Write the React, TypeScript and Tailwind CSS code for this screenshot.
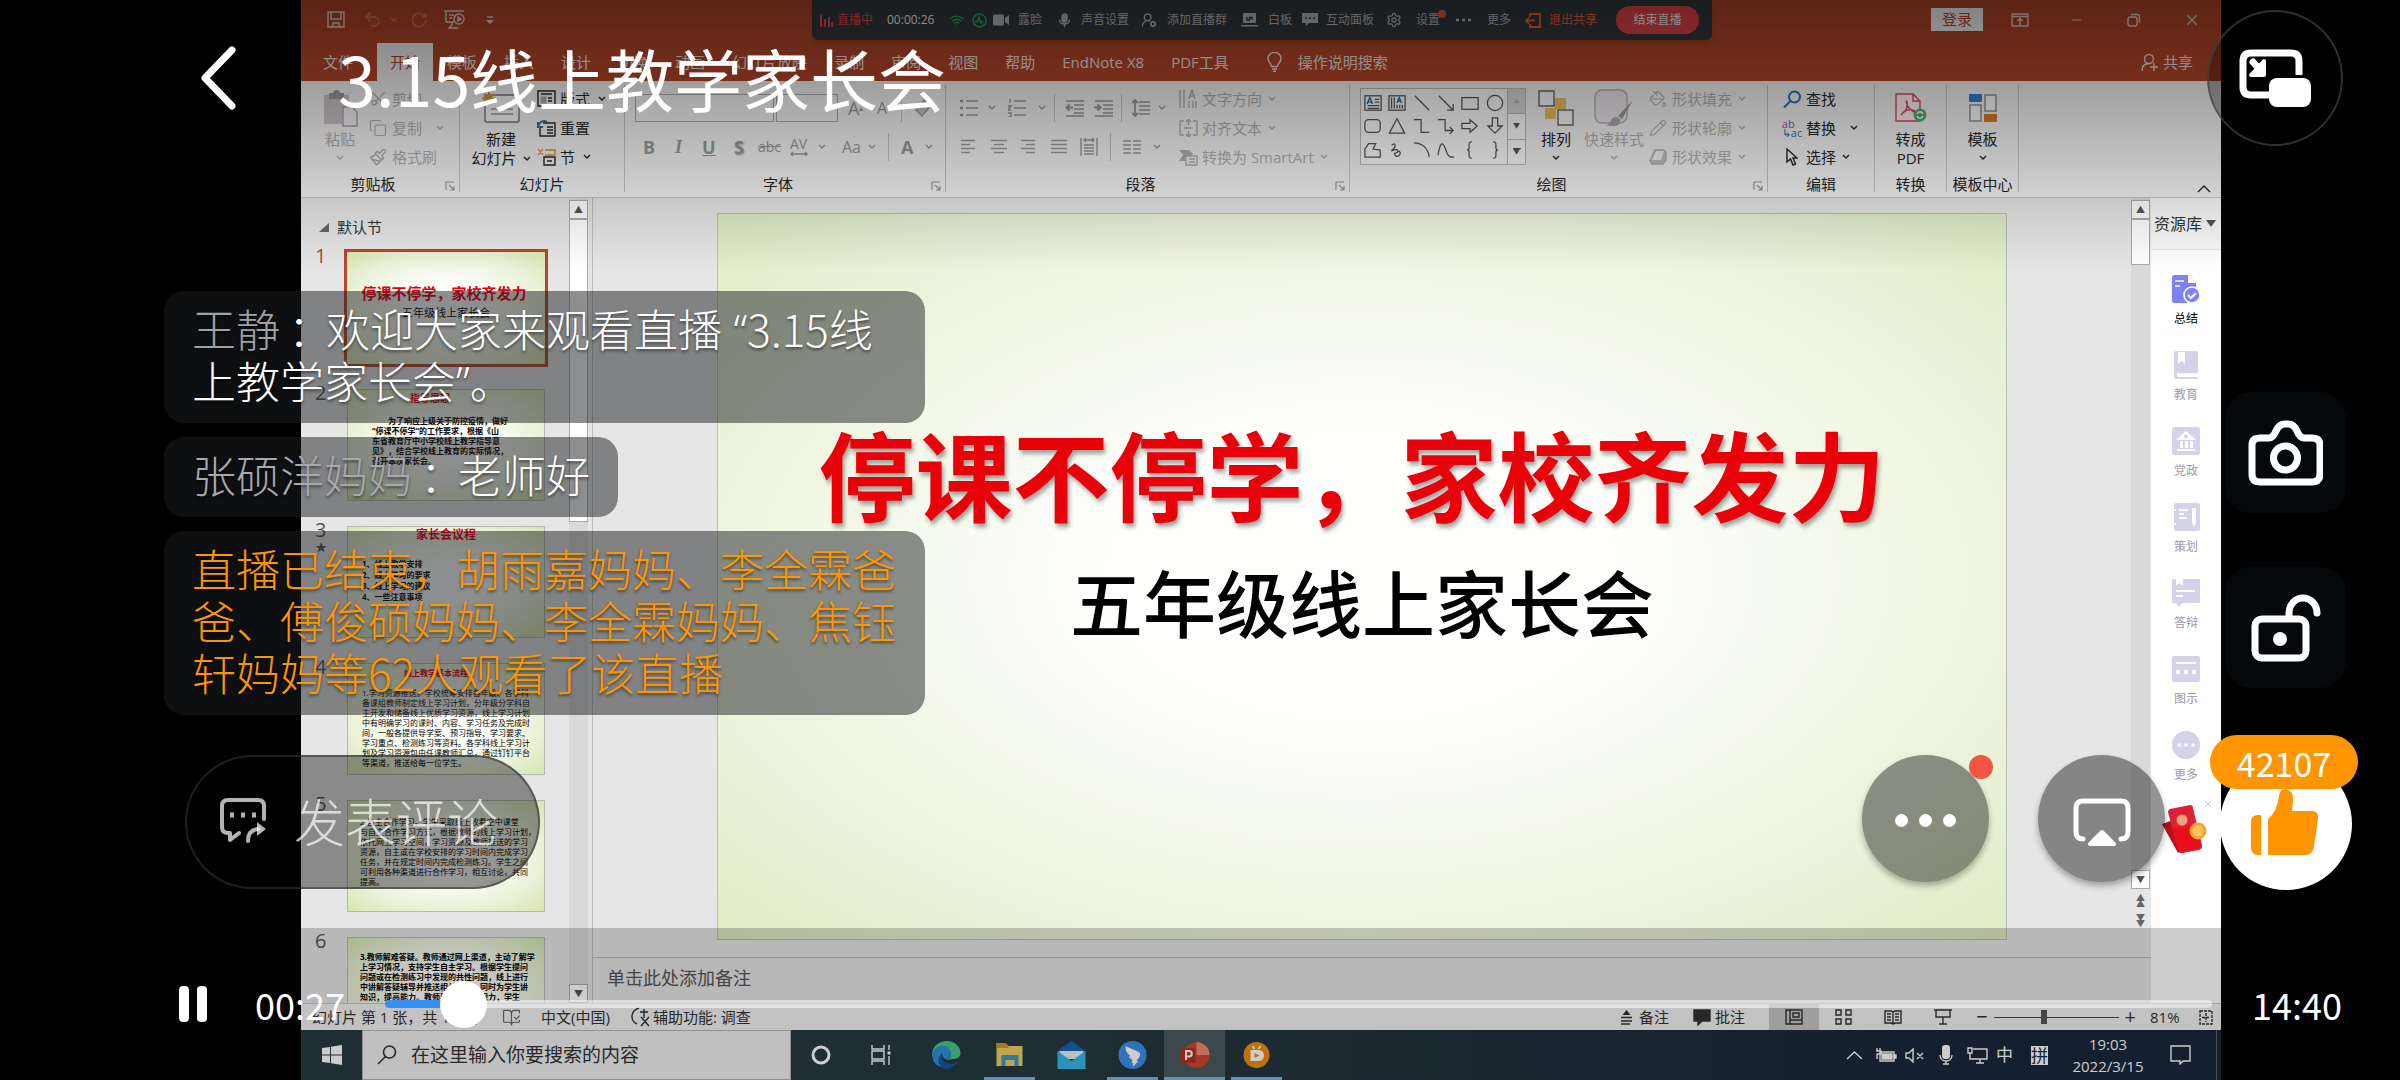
import { useState, type ReactNode } from 'react';
import {
  BookOpenCheck,
  Copy,
  Minus,
  PaintBucket,
  Paintbrush,
  Pencil,
  RotateCw,
  Scissors,
  Settings,
  Undo2,
  UserRoundCog,
  Wifi,
  X,
} from 'lucide-react';

interface DrawProps {
  w: number;
  h: number;
  vb?: string;
  sw?: number;
  className?: string;
  children: ReactNode;
}

// Line drawing with the page's default stroke settings
function Draw({ w, h, vb, sw = 1.4, className, children }: DrawProps) {
  return (
    <svg
      width={w}
      height={h}
      viewBox={vb ?? `0 0 ${w} ${h}`}
      fill="none"
      stroke="currentColor"
      strokeWidth={sw}
      className={`shrink-0 ${className ?? ''}`}
      aria-hidden="true"
    >
      {children}
    </svg>
  );
}

function Chev({ className }: { className?: string }) {
  return (
    <Draw w={8} h={6} className={className}>
      <path d="M1 1l3 3 3-3" />
    </Draw>
  );
}

function Divider() {
  return <span className="h-7 w-px shrink-0 bg-[#c4c4c4]" />;
}

/* ---------- title bar ---------- */

function LiveBar() {
  return (
    <div className="absolute left-[511px] top-0 flex h-10 w-[900px] items-center rounded-b-md bg-[#33393d] pl-2 text-xs text-[#b9bcbe] shadow-md">
      <Draw w={13} h={14} sw={2} className="text-[#e5484d]">
        <path d="M1 1v13M5 6v8M9 4v10M12 9v5" />
      </Draw>
      <span className="ml-1 w-[50px] text-[#e5484d]">直播中</span>
      <span className="w-[62px] text-white">00:00:26</span>
      <Wifi size={15} className="text-[#25b36a]" />
      <Draw w={15} h={15} className="ml-2 text-[#25b36a]">
        <circle cx="7.500" cy="7.500" r="6.500" />
        <path d="M3 9l3-1 1-4 2 6 2-2" />
      </Draw>
      <button className="ml-1.5 flex items-center gap-2">
        <Draw w={17} h={12} className="text-[#b9bcbe]">
          <rect x="0" y="0.500" width="11" height="11" rx="1.500" fill="currentColor" stroke="none" />
          <path d="M12 4l4-3v10l-4-3z" fill="currentColor" stroke="none" />
        </Draw>
        露脸
      </button>
      <button className="ml-4 flex items-center gap-2.5">
        <Draw w={13} h={15}>
          <rect x="4" y="1" width="5" height="8" rx="2.500" fill="currentColor" />
          <path d="M1.500 6.500c0 6 10 6 10 0M6.500 11v3" />
        </Draw>
        声音设置
      </button>
      <button className="ml-3 flex items-center gap-2.5">
        <UserRoundCog size={16} />
        添加直播群
      </button>
      <button className="ml-3.5 flex items-center gap-2.5">
        <Draw w={17} h={14}>
          <path d="M2 0h13v10H2zM0 12h17v1.500H0z" fill="currentColor" stroke="none" />
          <path d="M6 4v3h2.500V4.500H11V7" stroke="#33393d" />
        </Draw>
        白板
      </button>
      <button className="ml-2.5 flex items-center gap-2">
        <Draw w={16} h={14}>
          <path d="M0 0h16v10H7l-3 3v-3H0z" fill="currentColor" stroke="none" />
          <path d="M3 5h2M7 5h2M11 5h2" stroke="#33393d" />
        </Draw>
        互动面板
      </button>
      <button className="relative ml-3 flex items-center gap-3.5">
        <Settings size={16} />
        设置
        <span className="absolute -right-1.5 -top-0.5 size-2 rounded-full bg-[#f0543c]" />
      </button>
      <button className="ml-4 flex items-center gap-4">
        <Draw w={15} h={4}>
          <path d="M0 2h3M6 2h3M12 2h3" strokeWidth="2.500" />
        </Draw>
        更多
      </button>
      <button className="ml-3.5 flex items-center gap-2 text-[#f2603c]">
        <Draw w={16} h={15} sw={1.800}>
          <path d="M5 4V1h10v13H5v-3M10 7.500H1M4 4.500l-3 3 3 3" />
        </Draw>
        退出共享
      </button>
      <button className="ml-auto mr-[13px] h-7 w-[83px] rounded-full bg-[#e8474b] text-white">结束直播</button>
    </div>
  );
}

function TitleBar() {
  return (
    <div className="relative flex h-[43px] items-center bg-[#b7472a] px-5 pb-1 text-[#ecd9d4]">
      <Draw w={18} h={17} className="ml-1.5 mr-1">
        <path d="M1 1h16v15H1zM4 1v7h10V1M6 16v-4h6v4" />
      </Draw>
      <Undo2 size={19} className="ml-3.5 text-[#d0745c]" />
      <Chev className="ml-2 text-[#d0745c]" />
      <RotateCw size={18} className="ml-3 text-[#d0745c]" />
      <Draw w={22} h={19} className="ml-4">
        <path d="M0 1h20M2 1v11h8M8 12v3l-3 3h9M5 5h5M5 8h3" />
        <circle cx="15" cy="9" r="5" />
        <path d="M14 7l3 2-3 2z" fill="currentColor" />
      </Draw>
      <Draw w={8} h={8} className="ml-5">
        <path d="M1 1h6" />
        <path d="M0 4h8l-4 4z" fill="currentColor" stroke="none" />
      </Draw>
      <LiveBar />
      <button className="ml-auto h-[23px] w-[52px] bg-white text-[15px] leading-[23px] text-[#b7472a]">登录</button>
      <Draw w={18} h={14} className="ml-7">
        <path d="M1 1h16v12H1zM1 3.500h16M9 12V6M6.500 8L9 5.500 11.500 8" />
      </Draw>
      <Minus size={16} strokeWidth={1.500} className="ml-10" />
      <Draw w={14} h={14} className="ml-[42px]">
        <rect x="1" y="4" width="9" height="9" rx="2" />
        <path d="M4 1.500h6.500a2 2 0 0 1 2 2V10" />
      </Draw>
      <X size={18} strokeWidth={1.500} className="ml-[42px]" />
    </div>
  );
}

const tabs = ['文件', '开始', '模板', '插入', '设计', '切换', '动画', '幻灯片放映', '录制', '审阅', '视图', '帮助', 'EndNote X8', 'PDF工具'];

function TabRow() {
  return (
    <div className="flex h-[38px] items-stretch gap-px bg-[#b7472a] pl-[9px] pr-7 text-[15px] leading-9 text-[#f3e4e0]">
      {tabs.map((tab, i) => (
        <button
          key={tab}
          className={`px-[13px] ${i === 1 ? 'ml-2.5 bg-[#f3f3f3] text-[#b7472a]' : ''}`}
        >
          {tab}
        </button>
      ))}
      <button className="ml-6 flex items-center gap-4">
        <Draw w={15} h={20}>
          <path d="M4.500 14.500C4 11 1 10 1 6.500a6.300 6 0 0 1 13 0c0 3.500-3 4.500-3.500 8zM5 17h5M6 19.300h3" />
        </Draw>
        操作说明搜索
      </button>
      <button className="ml-auto flex items-center gap-1">
        <Draw w={18} h={18}>
          <circle cx="8" cy="6" r="4.500" />
          <path d="M1 18c0-5 3-7.500 7-7.500M13 10v8M9 14h8" />
        </Draw>
        共享
      </button>
    </div>
  );
}

/* ---------- ribbon ---------- */

interface GroupProps {
  label: string;
  width: string;
  launcher?: boolean;
  children: ReactNode;
}

function Group({ label, width, launcher, children }: GroupProps) {
  return (
    <>
      <section className={`flex h-28 shrink-0 flex-col ${width}`}>
        <div className="flex h-[87px]">{children}</div>
        <div className="flex h-6 items-center">
          <h2 className="flex-1 text-center">{label}</h2>
          {launcher && (
            <Draw w={10} h={10} className="mr-1 mt-1 text-[#999]" sw={1.200}>
              <path d="M1 9V1h8M4 4l5 5M9 5v4H5" />
            </Draw>
          )}
        </div>
      </section>
      <span className="h-[107px] w-px shrink-0 bg-[#c4c4c4]" />
    </>
  );
}

interface ItemProps {
  icon: ReactNode;
  text: string;
  chev?: string;
  dim?: boolean;
}

// One line of a three-line command column
function Item({ icon, text, chev, dim }: ItemProps) {
  return (
    <button className={`flex h-[29px] items-center whitespace-nowrap pb-0.5 ${dim ? 'text-[#b0b0b0]' : ''}`}>
      <span className="mr-1 flex w-5 justify-center">{icon}</span>
      {text}
      {chev && <Chev className={chev} />}
    </button>
  );
}

interface BigProps {
  icon: ReactNode;
  lines: string[];
  chev?: 'inline' | 'below';
  dim?: boolean;
  className?: string;
}

function BigButton({ icon, lines, chev, dim, className }: BigProps) {
  return (
    <button className={`flex flex-col items-center justify-start whitespace-nowrap leading-[19px] ${dim ? 'text-[#b0b0b0]' : ''} ${className ?? ''}`}>
      <span className="flex h-[45px] items-center">{icon}</span>
      {lines.map((line, i) => (
        <span key={line} className="flex items-center gap-1.5">
          {line}
          {chev === 'inline' && i === lines.length - 1 && <Chev />}
        </span>
      ))}
      {chev === 'below' && <Chev className="mt-1.5" />}
    </button>
  );
}

function ShapeGallery() {
  const shapes = [
    <><rect x="1" y="2" width="18" height="16" /><path d="M12 6h5M12 9h5M4 13h13M4 16h13" /><path d="M3.500 11l3-7 3 7M4.500 9h4" stroke="#2f6fa8" strokeWidth="1.600" /></>,
    <><rect x="1" y="2" width="18" height="16" /><path d="M4 4v12M7 4v12M10 12v4M13 12v4M16 12v4" /><path d="M10 10l2.500-6 2.500 6M11 8h3" stroke="#2f6fa8" strokeWidth="1.600" /></>,
    <path d="M2 2l16 16" />,
    <path d="M2 2l16 16M18 11v7h-7" />,
    <rect x="1" y="4" width="18" height="13" />,
    <circle cx="10" cy="10" r="8.500" />,
    <rect x="1" y="3" width="17" height="14" rx="4" />,
    <path d="M10 2l8.500 16h-17z" />,
    <path d="M1 3h8v14h9" />,
    <path d="M1 3h8v12h9M14 11l4 4-4 4" />,
    <path d="M1 7h9V3l8 7-8 7v-4H1z" />,
    <path d="M7 1h6v9h5l-8 8-8-8h5z" />,
    <path d="M5 3h8l-3 6 8 1v8H1V9z" />,
    <path d="M4 5c5-5 5 2 1 5s6-3 6 1-6 1-3 5 9-4 3-5" />,
    <path d="M1 2c9 0 16 6 17 16" />,
    <path d="M1 16C5-8 9 8 11 13s4 5 8 5" />,
    <path d="M12 1c-3 0-3 1-3 3v3c0 2-1 3-2 3 1 0 2 1 2 3v3c0 2 0 3 3 3" />,
    <path d="M8 1c3 0 3 1 3 3v3c0 2 1 3 2 3-1 0-2 1-2 3v3c0 2 0 3-3 3" />,
  ];
  return (
    <div className="mt-[3px] flex h-[77px] w-[166px] border border-[#bbb] bg-[#fbfbfb] text-[#555]">
      <div className="grid flex-1 grid-cols-6 place-items-center py-0.5">
        {shapes.map((shape, i) => (
          <Draw key={i} w={18} h={18} vb="0 0 20 20">
            {shape}
          </Draw>
        ))}
      </div>
      <div className="flex w-[18px] flex-col border-l border-[#bbb]">
        <span className="flex flex-1 items-center justify-center bg-[#d8d8d8] text-[5px] text-[#aaa]">▲</span>
        <span className="flex flex-1 items-center justify-center border-y border-[#bbb] text-[7px]">▼</span>
        <span className="flex flex-1 flex-col items-center justify-center text-[7px] leading-[6px]">
          <span className="h-px w-2 bg-[#555]" />▼
        </span>
      </div>
    </div>
  );
}

function Lines({ xs }: { xs: [number, number][] }) {
  return (
    <Draw w={18} h={16}>
      {xs.map(([a, b], i) => (
        <path key={i} d={`M${a} ${1.5 + i * 4}H${b}`} />
      ))}
    </Draw>
  );
}

function Ribbon() {
  return (
    <div className="flex h-[117px] shrink-0 border-b border-[#c6c6c6] bg-[#f3f3f3] pt-1 text-[15px] leading-5 text-[#262626]">
      <Group label="剪贴板" width="w-[158px]" launcher>
        <BigButton
          dim
          className="ml-[19px] w-10"
          lines={['粘贴']}
          chev="below"
          icon={
            <Draw w={35} h={38}>
              <rect x="1" y="6" width="25" height="29" fill="#c9c3c9" stroke="none" />
              <path d="M6 4h4c0-4 7-4 7 0h4v6H6z" fill="#9a9a9a" stroke="none" />
              <path d="M20 18h9l5 5v14H20z" fill="#f3eef4" stroke="#a9a2ab" />
            </Draw>
          }
        />
        <div className="ml-2">
          <Item dim icon={<Scissors size={17} className="-rotate-90" />} text="剪切" />
          <Item dim icon={<Copy size={18} strokeWidth={1.500} />} text="复制" chev="ml-3.5" />
          <Item dim icon={<Paintbrush size={18} />} text="格式刷" />
        </div>
      </Group>

      <Group label="幻灯片" width="w-[164px]">
        <BigButton
          className="ml-2.5 w-[62px]"
          lines={['新建', '幻灯片']}
          chev="inline"
          icon={
            <Draw w={40} h={34}>
              <rect x="4" y="4" width="34" height="27" rx="2" fill="#fafafa" stroke="#777" />
              <path d="M10 18h22M10 23h22" stroke="#999" />
              <path d="M8 1v13M1 7.500h14M3 3l10 9M13 3L3 12" stroke="#d9962f" strokeWidth="2" />
            </Draw>
          }
        />
        <div className="ml-1">
          <Item
            text="版式"
            chev="ml-2"
            icon={
              <Draw w={19} h={17}>
                <path d="M1 1h17v15H1zM4 4h11M11 8h4M11 11h4" />
                <rect x="3.500" y="6.500" width="6" height="7" fill="#aaa" stroke="none" />
              </Draw>
            }
          />
          <Item
            text="重置"
            icon={
              <Draw w={19} h={18}>
                <path d="M6 4h12v13H3V9M10 8h6M10 11h6M10 14h6" />
                <path d="M1 3v5h5M1 7c2-5 6-6 9-4" stroke="#2f6fa8" strokeWidth="2" />
              </Draw>
            }
          />
          <Item
            text="节"
            chev="ml-2"
            icon={
              <Draw w={19} h={18}>
                <path d="M8 2h10v5H8M1 1l5 6M6 1L1 7" stroke="#d9962f" />
                <path d="M7 9h11v8H7zM10 13h5" />
              </Draw>
            }
          />
        </div>
      </Group>

      <Group label="字体" width="w-[320px]" launcher>
        <div className="flex flex-1 flex-col gap-2.5 pl-2.5 pt-[9px] text-[#999]">
          <div className="flex h-7 items-center">
            <input aria-label="字体" className="h-7 w-[139px] border border-[#aaa]" />
            <input aria-label="字号" className="ml-0.5 h-7 w-[62px] border border-[#aaa]" />
            <span className="ml-2.5 w-[29px] text-lg">A<sup className="text-[8px]">▴</sup></span>
            <span className="w-6 text-base">A<sup className="text-[8px]">▾</sup></span>
            <Divider />
            <Draw w={18} h={20} className="ml-3">
              <path d="M2 12L10 2l5 8-7 8z" fill="#c8c8c8" />
            </Draw>
          </div>
          <div className="flex h-[30px] items-center text-lg">
            <b className="ml-2 w-8">B</b>
            <i className="w-[27px] font-['Liberation_Serif',serif] font-bold">I</i>
            <span className="w-8 font-bold underline">U</span>
            <b className="w-6 [text-shadow:1px_1px_2px_#999]">S</b>
            <span className="w-8 text-sm line-through">abc</span>
            <span className="flex w-7 flex-col text-sm leading-[14px]">
              AV
              <Draw w={18} h={6}>
                <path d="M1 3h16M3 1L1 3l2 2M15 1l2 2-2 2" />
              </Draw>
            </span>
            <Chev />
            <span className="ml-4 w-6 text-base">Aa</span>
            <Chev className="ml-0.5 mr-3" />
            <Divider />
            <b className="ml-3 w-6">A</b>
            <Chev />
          </div>
        </div>
      </Group>

      <Group label="段落" width="w-[403px]" launcher>
        <div className="flex w-[232px] flex-col gap-2.5 pl-3.5 pt-[9px] text-[#999]">
          <div className="flex h-7 items-center">
            <Draw w={18} h={18}>
              <path d="M6 2h12M6 9h12M6 16h12" />
              <path d="M0 2h3M0 9h3M0 16h3" strokeWidth="2.500" />
            </Draw>
            <Chev className="ml-2.5 mr-3" />
            <Draw w={18} h={18}>
              <path d="M6 2h12M6 9h12M6 16h12M2 0v4M0 7h3l-3 4h3M0 14h3v4H0" />
            </Draw>
            <Chev className="ml-3 mr-2" />
            <Divider />
            <Draw w={19} h={18} className="ml-2.5">
              <path d="M1 2h18M9 6h10M9 10h10M9 14h10M1 17h18" />
              <path d="M8 8.500H2M4.500 5.500l-3 3 3 3" strokeWidth="2" />
            </Draw>
            <Draw w={19} h={18} className="ml-2.5 mr-2">
              <path d="M1 2h18M9 6h10M9 10h10M9 14h10M1 17h18" />
              <path d="M0 8.500h6M3.500 5.500l3 3-3 3" strokeWidth="2" />
            </Draw>
            <Divider />
            <Draw w={18} h={18} className="ml-2.5">
              <path d="M7 3h11M7 7h11M7 11h11M7 15h11" />
              <path d="M3 1v16M0 4l3-3 3 3M0 14l3 3 3-3" strokeWidth="1.800" />
            </Draw>
            <Chev className="ml-2" />
          </div>
          <div className="flex h-[30px] items-center gap-3">
            <Lines xs={[[1, 15], [1, 10], [1, 15], [1, 10]]} />
            <Lines xs={[[1, 17], [4, 14], [1, 17], [4, 14]]} />
            <Lines xs={[[1, 15], [6, 15], [1, 15], [6, 15]]} />
            <Lines xs={[[1, 17], [1, 17], [1, 17], [1, 17]]} />
            <Draw w={18} h={20}>
              <path d="M1 1v18M17 1v18M4 3h10M6 1L4 3l2 2M12 1l2 2-2 2M4 8h10M4 11h10M4 14h10M4 17h10" />
            </Draw>
            <Divider />
            <Draw w={18} h={16}>
              <path d="M0 2h8M0 6h8M0 10h8M0 14h8M10 2h8M10 6h8M10 10h8M10 14h8" />
            </Draw>
            <Chev />
          </div>
        </div>
        <div>
          <Item
            dim
            text="文字方向"
            chev="ml-1.5"
            icon={
              <Draw w={18} h={20}>
                <path d="M1 1v18M5 1v18M10 12v7M14 12v7M17 12v7M10 10l3-9 3 9M11 7h4" />
              </Draw>
            }
          />
          <Item
            dim
            text="对齐文本"
            chev="ml-1.5"
            icon={
              <Draw w={19} h={18}>
                <path d="M5 2H1v14h4M14 2h4v14h-4M9.500 0v6M7 3l2.500-3L12 3M9.500 12v6M7 15l2.500 3 2.500-3M5 9h9" />
              </Draw>
            }
          />
          <Item
            dim
            text="转换为 SmartArt"
            chev="ml-1.5"
            icon={
              <Draw w={19} h={18}>
                <path d="M0 2h10l4 4-3 3H6v4H0l4-6z" fill="currentColor" stroke="none" />
                <path d="M7 8h11v9H7zM10 11h6M10 14h6" fill="#f3f3f3" />
              </Draw>
            }
          />
        </div>
      </Group>

      <Group label="绘图" width="w-[417px]" launcher>
        <div className="ml-2.5">
          <ShapeGallery />
        </div>
        <BigButton
          className="ml-1.5 w-12"
          lines={['排列']}
          chev="below"
          icon={
            <Draw w={36} h={36}>
              <path d="M17 8h11v11H17zM7 18h11v11H7z" fill="#eabf5c" stroke="none" />
              <path d="M1 1h15v15H1zM20 20h15v15H20z" fill="#f6f6f6" stroke="#666" />
            </Draw>
          }
        />
        <BigButton
          dim
          className="w-[68px]"
          lines={['快速样式']}
          chev="below"
          icon={
            <Draw w={40} h={38}>
              <rect x="1" y="1" width="32" height="33" rx="7" fill="#ebe6ec" stroke="#b5b0b6" />
              <path d="M39 11L24 27l4 3z" fill="#999" stroke="none" />
              <path d="M12 37c5-1 4-9 10-9s6 9-2 9z" fill="#aaa" stroke="none" />
            </Draw>
          }
        />
        <div>
          <Item dim text="形状填充" chev="ml-1.5" icon={<PaintBucket size={18} strokeWidth={1.500} />} />
          <Item dim text="形状轮廓" chev="ml-1.5" icon={<Pencil size={18} strokeWidth={1.500} />} />
          <Item
            dim
            text="形状效果"
            chev="ml-1.5"
            icon={
              <Draw w={18} h={16}>
                <path d="M6 1h9l2 3v7l-3 4H3l-2-3z" fill="#c2c2c2" />
                <path d="M7 2h8l-3 9H3z" fill="#f3f3f3" stroke="none" />
              </Draw>
            }
          />
        </div>
      </Group>

      <Group label="编辑" width="w-[106px]">
        <div className="ml-3.5">
          <Item
            text="查找"
            icon={
              <Draw w={19} h={18} sw={2} className="text-[#2f6fa8]">
                <circle cx="11.500" cy="7" r="5.500" />
                <path d="M7.500 11L1 17.500" />
              </Draw>
            }
          />
          <Item
            text="替换"
            chev="ml-3.5"
            icon={
              <span className="text-[11px] leading-[9px]">
                <span className="block text-left text-[#8a4fa0]">ab</span>
                <span className="block text-[#2f6fa8]">↳ac</span>
              </span>
            }
          />
          <Item
            text="选择"
            chev="ml-1.5"
            icon={
              <Draw w={12} h={18}>
                <path d="M1 1v13l3.500-3 2.500 6 2.500-1L7 10h4z" />
              </Draw>
            }
          />
        </div>
      </Group>

      <Group label="转换" width="w-[71px]">
        <BigButton
          className="flex-1"
          lines={['转成', 'PDF']}
          icon={
            <Draw w={32} h={30} className="text-[#d9455a]">
              <path d="M1 1h17l7 7v20H1zM18 1v7h7" fill="#fbeef0" />
              <path d="M6 22c5-4 7-9 6-13s-2 3 4 8 6 1 1 0-8 1-11 5z" />
              <circle cx="25" cy="22" r="6.500" fill="#4dae78" stroke="none" />
              <path d="M22 21c1-3 5-3 6 0M28 23c-1 3-5 3-6 0" stroke="#fff" />
            </Draw>
          }
        />
      </Group>

      <Group label="模板中心" width="w-[71px]">
        <BigButton
          className="flex-1"
          lines={['模板']}
          chev="below"
          icon={
            <Draw w={28} h={28} className="text-[#888]">
              <rect x="0" y="0" width="13" height="8" rx="1" fill="#2f80d0" stroke="none" />
              <rect x="16" y="1" width="11" height="16" fill="#fafafa" />
              <rect x="1" y="11" width="11" height="16" fill="#fafafa" />
              <rect x="15" y="20" width="13" height="8" rx="1" fill="#dc7a1c" stroke="none" />
            </Draw>
          }
        />
      </Group>
      <Draw w={14} h={9} className="mb-1 ml-auto mr-2.5 self-end">
        <path d="M1 8l6-6 6 6" />
      </Draw>
    </div>
  );
}

/* ---------- slide list ---------- */

interface Thumb {
  title?: string;
  titleClass?: string;
  body: string[];
  bodyClass: string;
}

const thumbs: Thumb[] = [
  {
    title: '停课不停学，家校齐发力',
    titleClass: 'pt-8 pr-1 text-[15px] leading-[18px]',
    body: ['五年级线上家长会'],
    bodyClass: 'pt-[3px] text-center text-[11px] leading-4',
  },
  {
    title: '指导思想',
    titleClass: 'pr-8 text-[10px] leading-4',
    body: [
      '　　为了响应上级关于防控疫情，做好',
      '“停课不停学”的工作要求，根据《山',
      '东省教育厅中小学校线上教学指导意',
      '见》，结合学校线上教育的实际情况，',
      '召开本次家长会。',
    ],
    bodyClass: 'pl-6 pt-2.5 text-[8px] leading-[10px] font-bold',
  },
  {
    title: '家长会议程',
    titleClass: 'text-xs leading-4',
    body: ['1、线上教学安排', '2、线上学习的要求', '3、线上学习的建议', '4、一些注意事项'],
    bodyClass: 'pl-3.5 pt-[15px] text-[8px] leading-[11px] font-bold',
  },
  {
    title: '线上教学基本流程',
    titleClass: 'pt-0.5 pr-5 text-[8px] leading-[14px]',
    body: [
      '1.学习资源推送。学校统筹安排各年级、各学科',
      '备课组教师制定线上学习计划，分年级分学科自',
      '主开发和储备线上优质学习资源，线上学习计划',
      '中有明确学习的课时、内容、学习任务及完成时',
      '间，一般各提供导学案、预习指导、学习要求、',
      '学习重点、检测练习等资料。各学科线上学习计',
      '划及学习资源包由任课教师汇总，通过钉钉平台',
      '等渠道，推送给每一位学生。',
    ],
    bodyClass: 'pl-3.5 pt-2 text-[8px] leading-[10px]',
  },
  {
    body: [
      '2.自主合作学习。学生采取线上收看空中课堂',
      '与自主合作学习方式，根据教师的线上学习计划，',
      '依托网上学习空间，学习资源及教师推送的学习',
      '资源，自主或在学校安排的学习时间内完成学习',
      '任务，并在规定时间内完成检测练习。学生之间',
      '可利用各种渠道进行合作学习，相互讨论，共同',
      '提高。',
    ],
    bodyClass: 'pl-3 pt-4 text-[8px] leading-[10px]',
  },
  {
    body: [
      '3.教师解难答疑。教师通过网上渠道，主动了解学',
      '上学习情况，支持学生自主学习。根据学生提问',
      '问题或在检测练习中发现的共性问题，线上进行',
      '中讲解答疑辅导并推送相关内容，同时为学生讲',
      '知识，提高能力。教师要保护学生视力，学生',
    ],
    bodyClass: 'pl-3 pt-[14px] text-[8px] leading-[10px] font-bold',
  },
];

function ScrollButton({ children }: { children: string }) {
  return (
    <span className="flex h-[19px] w-full shrink-0 items-center justify-center border border-[#ababab] bg-white text-[9px] text-[#555]">
      {children}
    </span>
  );
}

function SlideList() {
  return (
    <aside className="flex w-[292px] shrink-0 border-r border-[#bdbdbd] bg-[#e6e6e6]">
      <div className="min-h-0 w-[268px] overflow-hidden">
        <div className="flex h-[54px] items-center gap-2 pl-[18px] pt-1 text-[15px] text-[#333]">
          <Draw w={10} h={9}>
            <path d="M10 0v9H0z" fill="#666" stroke="none" />
          </Draw>
          默认节
        </div>
        {thumbs.map((thumb, i) => (
          <div key={i} className="flex h-[137px]">
            <div className={`-mt-1.5 w-[46px] pl-3.5 text-xl leading-none ${i === 0 ? 'text-[#b7472a]' : 'text-[#555]'}`}>
              {i + 1}
              {i === 2 && <span className="block text-xs leading-4">★</span>}
            </div>
            <div
              className={`h-28 w-[198px] overflow-hidden whitespace-nowrap bg-[radial-gradient(ellipse_at_center,#ffffff_25%,#eaf2d8_70%,#d5e6b0_100%)] text-black ${
                i === 0 ? 'outline-3 outline-[#b7472a]' : 'border border-[#b5b9ac]'
              }`}
            >
              {thumb.title && <div className={`text-center font-bold text-[#e00014] ${thumb.titleClass}`}>{thumb.title}</div>}
              <div className={thumb.bodyClass}>
                {thumb.body.map((line) => (
                  <div key={line}>{line}</div>
                ))}
              </div>
            </div>
          </div>
        ))}
      </div>
      <div className="flex w-[19px] flex-col bg-[#dadada] pt-0.5">
        <ScrollButton>▲</ScrollButton>
        <span className="h-[303px] border border-[#ababab] bg-white" />
        <span className="flex-1" />
        <ScrollButton>▼</ScrollButton>
      </div>
    </aside>
  );
}

/* ---------- main slide ---------- */

function Editor() {
  return (
    <main className="flex min-w-0 flex-1 flex-col bg-[#e6e6e6]">
      <div className="flex min-h-0 flex-1">
        <div className="flex flex-1 items-center justify-center pb-0.5">
          <div className="flex aspect-[1295/729] h-[96%] flex-col items-center border border-[#b9c0b0] bg-[radial-gradient(ellipse_at_center,#fefffc_28%,#eef4df_70%,#dfecc4_100%)] pt-[213px]">
            <h1 className="mr-5 whitespace-nowrap text-[97px] font-bold leading-[98px] text-[#e90008] [text-shadow:2px_4px_4px_rgba(0,0,0,0.35)]">
              停课不停学，家校齐发力
            </h1>
            <p className="mt-[42px] whitespace-nowrap text-[73px] font-medium leading-[73px] text-black">五年级线上家长会</p>
          </div>
        </div>
        <div className="flex w-5 flex-col border-r border-[#e6e6e6] bg-[#dadada] pt-0.5">
          <ScrollButton>▲</ScrollButton>
          <span className="h-[46px] border border-[#ababab] bg-white" />
          <span className="flex-1" />
          <ScrollButton>▼</ScrollButton>
          <span className="flex h-[68px] flex-col items-center gap-2 bg-[#e6e6e6] pt-1.5 text-[9px] leading-[6px] text-[#666]">
            <span>▲<br />▲</span>
            <span>▼<br />▼</span>
          </span>
        </div>
      </div>
      <div className="flex h-[46px] items-center border-t border-[#b9b9b9] pb-1.5 pl-3.5 text-lg text-[#555]">单击此处添加备注</div>
    </main>
  );
}

/* ---------- resource panel ---------- */

const resources: { label: string; art: ReactNode }[] = [
  {
    label: '总结',
    art: (
      <>
        <path d="M2 0h14l8 8v20H2a2 2 0 0 1-2-2V2a2 2 0 0 1 2-2z" fill="#7f82f5" />
        <path d="M16 0v8h8z" fill="#fff" />
        <path d="M3 6h9M3 11h5" stroke="#fff" strokeWidth="1.600" />
        <circle cx="20" cy="20" r="8" fill="#7f82f5" stroke="#fff" strokeWidth="1.600" />
        <path d="M16 20l3 3 5-5" stroke="#fff" strokeWidth="2" />
      </>
    ),
  },
  {
    label: '教育',
    art: (
      <>
        <rect x="2" width="24" height="28" rx="2" fill="#d4d3ea" />
        <path d="M6 1h7v12l-3.500-3L6 13zM5 22h21v4H5z" fill="#fff" />
      </>
    ),
  },
  {
    label: '党政',
    art: (
      <>
        <rect width="28" height="28" rx="2" fill="#d4d3ea" />
        <path d="M14 4l10 9H4zM8 14h3v7H8zM13 14h3v7h-3zM18 14h3v7h-3zM5 22h18v2H5z" fill="#fff" />
        <circle cx="14" cy="9.500" r="2" fill="#d4d3ea" />
      </>
    ),
  },
  {
    label: '策划',
    art: (
      <>
        <rect x="2" width="26" height="28" rx="2" fill="#d4d3ea" />
        <path d="M0 7h4M0 21h4M7 7h9M7 11h5M7 15h8" stroke="#fff" strokeWidth="2" />
        <path d="M20 5h4v15l-2 4-2-4z" fill="#fff" />
      </>
    ),
  },
  {
    label: '答辩',
    art: (
      <>
        <path d="M0 0h28v24H10l-3 4-3-4H0z" fill="#d4d3ea" />
        <path d="M4 0h7v7L7.500 4 4 7z" fill="#fff" />
        <path d="M4 12h19M4 17h7" stroke="#fff" strokeWidth="2" />
      </>
    ),
  },
  {
    label: '图示',
    art: (
      <>
        <rect y="1" width="28" height="26" rx="2" fill="#d4d3ea" />
        <path d="M4 8h20" stroke="#fff" strokeWidth="2" />
        <path d="M4 17h4M12 17h4M20 17h4" stroke="#fff" strokeWidth="4" />
      </>
    ),
  },
  {
    label: '更多',
    art: (
      <>
        <circle cx="14" cy="14" r="14" fill="#d4d3ea" />
        <path d="M5.500 14h3M12.500 14h3M19.500 14h3" stroke="#fff" strokeWidth="3" />
      </>
    ),
  },
];

function ResourcePanel() {
  return (
    <aside className="relative flex w-[70px] shrink-0 flex-col bg-white">
      <button className="flex h-[52px] items-center border-b border-[#e8e8e8] bg-[#fafafa] pl-[3px] text-base text-[#333]">
        资源库
        <Draw w={10} h={7} className="ml-1">
          <path d="M0 0h10L5 7z" fill="#555" stroke="none" />
        </Draw>
      </button>
      <div className="pt-[17px]">
        {resources.map((item, i) => (
          <button
            key={item.label}
            className={`flex h-[76px] w-full flex-col items-center gap-2.5 pt-2 text-xs leading-3 ${i === 0 ? 'text-black' : 'text-[#9a9aa8]'}`}
          >
            <svg width="28" height="28" viewBox="0 0 28 28" fill="none" aria-hidden="true">
              {item.art}
            </svg>
            {item.label}
          </button>
        ))}
      </div>
      <X size={12} strokeWidth={1} className="absolute left-[51px] top-[600px] text-[#999]" />
      <svg width="46" height="50" viewBox="0 0 46 50" className="absolute left-2.5 top-[606px]" aria-hidden="true">
        <path d="M1 20l14-5 12 28-10 6z" fill="#b3121f" />
        <path d="M9 5l20-4q3 0 3 3l9 38q0 3-3 4l-17 3q-3 0-4-3L7 8q0-2 2-3z" fill="#dc2137" />
        <path d="M10 23q12 4 26-4l5 24-20 6q-3 0-4-3z" fill="#e80e1c" />
        <circle cx="21" cy="16" r="5.500" fill="#f2a07a" />
        <circle cx="37" cy="27" r="8.500" fill="#f0a52e" />
        <circle cx="37" cy="27" r="5.500" fill="#f7c35a" />
      </svg>
    </aside>
  );
}

/* ---------- status bar and taskbar ---------- */

function StatusBar() {
  return (
    <div className="flex h-[27px] shrink-0 items-center border-t border-[#c6c6c6] bg-[#f3f3f3] pl-[11px] pr-2 text-[15px] text-[#333]">
      <span className="w-[190px] whitespace-nowrap">幻灯片 第 1 张，共 15 张</span>
      <BookOpenCheck size={19} strokeWidth={1.500} className="text-[#666]" />
      <span className="ml-5 w-[90px] whitespace-nowrap">中文(中国)</span>
      <Draw w={20} h={20}>
        <path d="M8 1c-9 3-9 13-2 16M9 5h8M13 2v9M10 19l8-9M10 10l8 9" />
      </Draw>
      <span className="ml-0.5">辅助功能: 调查</span>
      <button className="ml-auto flex items-center gap-1.5">
        <Draw w={13} h={15}>
          <path d="M6.500 0l4 5h-8z" fill="currentColor" stroke="none" />
          <path d="M1 7.500h11M1 11h11M1 14h9" />
        </Draw>
        备注
      </button>
      <button className="ml-6 flex items-center gap-1">
        <Draw w={18} h={17}>
          <path d="M1 1h16v11H9l-4 4v-4H1z" fill="currentColor" />
        </Draw>
        批注
      </button>
      <span className="ml-6 flex h-full w-[50px] items-center justify-center bg-[#c6c6c6]">
        <Draw w={18} h={16}>
          <path d="M1 1h16v14H1zM5 1v14M5 11h12M8 4h6v4H8z" />
        </Draw>
      </span>
      <Draw w={17} h={16} className="ml-4">
        <path d="M1 1h5v5H1zM11 1h5v5h-5zM1 10h5v5H1zM11 10h5v5h-5z" />
      </Draw>
      <Draw w={18} h={15} className="ml-8">
        <path d="M9 2v12M1 1h6l2 1 2-1h6v12h-6l-2 1-2-1H1zM3 4h4M3 7h4M3 10h4M11 4h4M11 7h4M11 10h4" />
      </Draw>
      <Draw w={18} h={16} className="ml-8">
        <path d="M0 1h18M2 1v7h14V1M9 8v7M5 15h8" />
      </Draw>
      <span className="ml-6 text-xl leading-none">−</span>
      <input
        type="range"
        aria-label="缩放"
        defaultValue={40}
        className="mx-1.5 h-4 w-[125px] appearance-none bg-[linear-gradient(#444,#444)] bg-[length:100%_1px] bg-center bg-no-repeat [&::-webkit-slider-thumb]:h-3.5 [&::-webkit-slider-thumb]:w-1.5 [&::-webkit-slider-thumb]:appearance-none [&::-webkit-slider-thumb]:bg-[#555]"
      />
      <span className="text-xl leading-none">+</span>
      <span className="ml-3.5 w-[49px]">81%</span>
      <Draw w={14} h={15}>
        <path d="M1 1h12v13H1zM7 3v9M3 7.500h8" strokeDasharray="3 1" />
      </Draw>
    </div>
  );
}

interface TaskAppProps {
  name: string;
  width: string;
  open?: boolean;
  active?: boolean;
  children: ReactNode;
}

function TaskApp({ name, width, open, active, children }: TaskAppProps) {
  return (
    <button
      aria-label={name}
      className={`flex h-full items-center justify-center ${width} ${active ? 'bg-[#4a5a60]' : ''} ${open ? 'border-b-3 border-[#7db4e0] pt-[3px]' : ''}`}
    >
      <svg width="31" height="30" viewBox="0 0 30 30" aria-hidden="true">
        {children}
      </svg>
    </button>
  );
}

function Taskbar() {
  return (
    <div className="flex h-[50px] shrink-0 items-center bg-[linear-gradient(90deg,#273a3f_40%,#1a273b_85%)] text-white">
      <button aria-label="开始" className="flex w-[61px] justify-center">
        <svg width="20" height="20" viewBox="0 0 20 20" fill="#fff" aria-hidden="true">
          <path d="M0 3l8-1v7.500H0zM9 1.800L20 0v9.500H9zM0 10.500h8V18l-8-1zM9 10.500h11V20L9 18.200z" />
        </svg>
      </button>
      <label className="flex h-full w-[429px] items-center gap-3.5 border border-[#b5b5b5] bg-[#f1f1f1] pl-3.5">
        <Draw w={20} h={20} sw={1.600} className="text-[#333]">
          <circle cx="12.500" cy="7" r="6" />
          <path d="M8.500 11.500L1 19" />
        </Draw>
        <input
          aria-label="搜索"
          placeholder="在这里输入你要搜索的内容"
          className="min-w-0 flex-1 text-[19px] placeholder:text-[#333]"
        />
      </label>
      <Draw w={20} h={20} sw={3} className="ml-5">
        <circle cx="10" cy="10" r="8" />
      </Draw>
      <Draw w={20} h={20} className="ml-10 mr-8">
        <path d="M1 0v4h12V0M1 6h12v8H1zM1 20v-4h12v4M18 0v5M18 11v9" />
        <path d="M18 6.500v3" strokeWidth="3" />
      </Draw>
      <TaskApp name="Edge" width="w-[46px]">
        <path d="M15 1c8 0 14 5 14 12 0 5-4 6-8 6-3 0-3-1-2-3 1-4-2-7-6-7-6 0-11 4-12 9C-1 8 6 1 15 1z" fill="#43c98b" />
        <path d="M1 16C1 9 7 5 13 6c5 1 8 6 6 10-2 2-1 3 2 3-7 3-11-2-10-6-3 3-4 9 1 14C5 27 1 22 1 16z" fill="#2f8fd8" />
        <path d="M11 14c-3 9 8 12 15 8-3 5-9 8-15 6-6-4-5-12 0-14z" fill="#1a55a5" />
      </TaskApp>
      <span className="w-[15px]" />
      <TaskApp name="文件资源管理器" width="w-[51px]" open>
        <path d="M2 3h9l3 3h14v20H2z" fill="#f0cf60" />
        <path d="M2 3h9l3 3v2H2z" fill="#d09a20" />
        <path d="M7 15h17v11h-4v-6h-9v6H7z" fill="#3f96cf" />
      </TaskApp>
      <span className="w-3" />
      <TaskApp name="邮件" width="w-12">
        <path d="M1 11L15 1l14 10v3H1z" fill="#1566b4" />
        <path d="M3 11h24v8H3z" fill="#eee" />
        <path d="M1 11l14 10L29 11v18H1z" fill="#35b6e8" />
      </TaskApp>
      <span className="w-3" />
      <TaskApp name="钉钉" width="w-[51px]" open>
        <circle cx="15" cy="15" r="14" fill="#3d90ea" />
        <path d="M8 6l13 6c2 1 2 3 1 5l-3 4h2l-6 6 1-4h-2l1-3-4-3 2-1c-4-3-5-6-5-10z" fill="#fff" />
      </TaskApp>
      <span className="w-1.5" />
      <TaskApp name="PowerPoint" width="w-[61px]" open active>
        <circle cx="17" cy="15" r="13" fill="#d0472f" />
        <path d="M17 2a13 13 0 0 1 13 13H17z" fill="#f08a70" />
        <rect x="1" y="8" width="15" height="15" rx="1" fill="#b5301e" />
        <path d="M6.500 20v-9h3a2.700 2.700 0 0 1 0 5.500h-3" fill="none" stroke="#fff" strokeWidth="2" />
      </TaskApp>
      <span className="w-1.5" />
      <TaskApp name="直播" width="w-[51px]" open>
        <circle cx="15" cy="15" r="13" fill="#f08c10" />
        <path d="M9 10h8a5 5 0 0 1 0 11H9z" fill="#fff" />
        <path d="M13 9l-2-3M17 9l2-3" stroke="#fff" strokeWidth="1.500" />
        <path d="M13 13l5 2.500-5 2.500z" fill="#f08c10" />
      </TaskApp>

      <div className="ml-auto flex h-full items-center">
        <Draw w={17} h={10}>
          <path d="M1 9l7.500-7L16 9" />
        </Draw>
        <Draw w={22} h={16} className="ml-3">
          <path d="M5 5h14v9H5z" />
          <path d="M7 7h10v5H7zM19 8h2v3h-2z" fill="currentColor" />
          <path d="M2 1v3M5 1v3M1 4h5v3H2v5" />
        </Draw>
        <Draw w={20} h={15} className="ml-2">
          <path d="M1 5h3l4-4v13l-4-4H1zM12 5l6 6M18 5l-6 6" />
        </Draw>
        <Draw w={14} h={20} className="ml-3.5">
          <rect x="3" y="0" width="8" height="14" rx="3" fill="currentColor" stroke="none" />
          <path d="M1 10c0 8 12 8 12 0M7 16v3M4 19h6" />
        </Draw>
        <Draw w={21} h={17} className="ml-3.5">
          <path d="M6 2h14v10H6M13 12v4M9 16h8M1 1h4v5H1zM3 6v6h5" />
        </Draw>
        <span className="ml-2 text-[17px]">中</span>
        <span className="ml-[18px] bg-white text-[17px] leading-[19px] text-[#1a273b]">拼</span>
        <div className="ml-[22px] w-[76px] text-center text-[15px] leading-[22px]">
          <div>19:03</div>
          <div>2022/3/15</div>
        </div>
        <Draw w={21} h={20} className="ml-6">
          <path d="M1 1h19v15h-7l-3 3v-3H1z" />
        </Draw>
        <span className="ml-[25px] mr-1 h-full w-px bg-[#566]" />
      </div>
    </div>
  );
}

/* ---------- player overlay ---------- */

const bubbleClass = 'w-fit max-w-[761px] rounded-[20px] bg-[#1b1d20]/50 px-7 pb-[17px] pt-[11px] text-[44px] leading-[52px] font-light text-white [text-shadow:0_2px_3px_rgba(0,0,0,0.5)]';

function Colon() {
  return <span className="inline-block w-[46px] pl-2">：</span>;
}

function ChatMessages() {
  return (
    <div className="absolute left-[164px] top-[291px] flex w-[761px] flex-col gap-3.5">
      <p className={bubbleClass}>
        <span className="text-[#a0a0a5]">王静</span><Colon />欢迎大家来观看直播
        <span className="font-['Noto_Sans',sans-serif] leading-none"> “</span>3.15线上教学家长会
        <span className="font-['Noto_Sans',sans-serif] leading-none">”</span>。
      </p>
      <p className={bubbleClass}>
        <span className="text-[#a8a8ae]">张硕洋妈妈</span><Colon />老师好
      </p>
      <p className={`${bubbleClass} text-[#ff9500]!`}>
        直播已结束，胡雨嘉妈妈、李全霖爸爸、傅俊硕妈妈、李全霖妈妈、焦钰轩妈妈等62人观看了该直播
      </p>
    </div>
  );
}

function SideButtons() {
  return (
    <>
      <button
        aria-label="小窗播放"
        className="absolute right-[57px] top-2.5 flex size-[136px] items-center justify-center rounded-full border-2 border-[#444]/70 bg-black/30"
      >
        <Draw w={72} h={58} sw={7} className="text-white">
          <path d="M30 46H12q-8 0-8-8V12q0-8 8-8h40q8 0 8 8v14" />
          <path d="M14 13l9 10" strokeLinecap="round" />
          <path d="M25 12v14H12z" fill="currentColor" strokeWidth="4" strokeLinejoin="round" />
          <rect x="30" y="29" width="42" height="29" rx="8" fill="currentColor" stroke="none" />
        </Draw>
      </button>
      <div className="absolute right-[54px] top-[392px] flex flex-col gap-[54px] text-white">
        <button aria-label="截图" className="flex size-[121px] items-center justify-center rounded-[26px] bg-[#05080a]">
          <Draw w={75} h={66} sw={7}>
            <path d="M12 18h9q4 0 7-7t9-7h3q6 0 9 7t7 7h8q8 0 8 7v29q0 8-8 8H12q-8 0-8-8V25q0-7 8-7z" />
            <circle cx="37.500" cy="38" r="12" />
          </Draw>
        </button>
        <button aria-label="锁定" className="flex size-[121px] items-center justify-center rounded-[26px] bg-[#05080a]">
          <Draw w={70} h={68} sw={7}>
            <rect x="4" y="25" width="51" height="39" rx="7" />
            <path d="M38 24v-5a14 15 0 0 1 28 0" strokeLinecap="round" />
            <circle cx="29" cy="45" r="7" fill="currentColor" stroke="none" />
          </Draw>
        </button>
      </div>
    </>
  );
}

function ActionButtons() {
  return (
    <div className="absolute right-[48px] top-[755px] flex text-white">
      <button
        aria-label="更多"
        className="relative mr-[49px] flex size-[127px] items-center justify-center gap-[11px] rounded-full bg-black/42 pt-1 shadow-[0_4px_6px_rgba(0,0,0,0.3)]"
      >
        <span className="size-[13px] rounded-full bg-white" />
        <span className="size-[13px] rounded-full bg-white" />
        <span className="size-[13px] rounded-full bg-white" />
        <span className="absolute -right-1 top-0 size-6 rounded-full bg-[#f55542]" />
      </button>
      <button
        aria-label="投屏"
        className="mr-[55px] flex size-[127px] items-center justify-center rounded-full bg-black/42 pt-1.5 shadow-[0_4px_6px_rgba(0,0,0,0.3)]"
      >
        <Draw w={58} h={48} sw={5}>
          <path d="M10 41q-7 0-7-7V10q0-7 7-7h38q7 0 7 7v24q0 7-7 7" strokeLinecap="round" />
          <path d="M29 34l12 12H17z" fill="currentColor" strokeWidth="4" strokeLinejoin="round" />
        </Draw>
      </button>
      <button aria-label="点赞" className="relative mt-[3px] flex size-[132px] items-center justify-center rounded-full bg-white pb-1 pr-1">
        <svg width="68" height="66" viewBox="0 0 68 66" fill="#ff9500" aria-hidden="true">
          <path d="M8 26h3v40H8q-7 0-7-8V33q0-7 7-7zM18 66V30q9-7 11-23 1-7 6-7 9 1 8 13l-1 9h20q7 0 6 8l-4 27q-1 9-9 9z" />
        </svg>
        <span className="absolute -left-2.5 -top-[23px] flex h-[54px] w-[148px] items-center justify-center rounded-full bg-[#ff9500] text-[34px]">
          42107
        </span>
      </button>
    </div>
  );
}

const duration = 880;

function formatTime(seconds: number) {
  const m = String(Math.floor(seconds / 60)).padStart(2, '0');
  const s = String(seconds % 60).padStart(2, '0');
  return `${m}:${s}`;
}

function PlayerControls() {
  const [time, setTime] = useState(27);

  return (
    <div className="absolute inset-x-0 bottom-[52px] flex h-12 items-center pl-[179px] pr-[58px] text-4xl leading-none text-white">
      <button aria-label="暂停" className="mr-12 flex gap-2">
        <span className="h-9 w-2.5 rounded-sm bg-white" />
        <span className="h-9 w-2.5 rounded-sm bg-white" />
      </button>
      <span className="mr-10 w-[90px]">{formatTime(time)}</span>
      <div className="relative flex-1">
        <div className="absolute inset-x-0 top-1/2 h-2 -translate-y-1/2 rounded bg-white/50">
          <div className="h-full rounded bg-[#3291f8]" style={{ width: `calc(24px + ${(time / duration) * 97}%)` }} />
        </div>
        <input
          type="range"
          aria-label="播放进度"
          min={0}
          max={duration}
          value={time}
          onChange={(e) => setTime(Number(e.target.value))}
          className="relative block h-12 w-full appearance-none bg-transparent [&::-webkit-slider-thumb]:size-[47px] [&::-webkit-slider-thumb]:appearance-none [&::-webkit-slider-thumb]:rounded-full [&::-webkit-slider-thumb]:bg-white"
        />
      </div>
      <span className="ml-10 w-[90px]">{formatTime(duration)}</span>
    </div>
  );
}

export default function App() {
  return (
    <div className="relative flex h-screen overflow-hidden bg-black pl-[301px] pr-[179px] font-[family-name:'Open_Sans','Noto_Sans_CJK_SC',sans-serif]">
      <div className="relative flex min-w-0 flex-1 flex-col overflow-hidden">
        <TitleBar />
        <TabRow />
        <Ribbon />
        <div className="flex min-h-0 flex-1">
          <SlideList />
          <Editor />
          <ResourcePanel />
        </div>
        <StatusBar />
        <Taskbar />
        {/* Shades behind the player's own controls */}
        <div className="pointer-events-none absolute inset-x-0 top-0 h-[270px] bg-linear-to-b from-black/50 to-transparent" />
        <div className="pointer-events-none absolute inset-x-0 bottom-0 h-[152px] bg-black/20" />
      </div>

      <div className="absolute inset-0 font-[family-name:'Noto_Sans_CJK_SC',sans-serif]">
        <header className="absolute left-[200px] top-7 flex h-[100px] items-center text-white">
          <button aria-label="返回" className="w-[138px]">
            <Draw w={36} h={64} sw={7}>
              <path d="M32 4L5 32l27 28" strokeLinecap="round" strokeLinejoin="round" />
            </Draw>
          </button>
          <h1 className="text-[68px] leading-none">3.15线上教学家长会</h1>
        </header>
        <ChatMessages />
        <button className="absolute left-[185px] top-[755px] flex h-[134px] w-[355px] items-center gap-[27px] rounded-full border-2 border-[#333]/60 bg-black/40 pb-1 pl-8 text-[51px] font-light text-white/70">
          <Draw w={48} h={46} sw={4}>
            <path d="M45 22V9q0-6-6-6H9Q3 3 3 9v21q0 6 6 6h2v7l9-7" strokeLinecap="round" strokeLinejoin="round" />
            <path d="M11 18h4M22 18h4M33 18h4" strokeWidth="5" />
            <path d="M29 44q0-11 10-12" strokeLinecap="round" />
            <path d="M38 25l9 7-9 7z" fill="currentColor" stroke="none" />
          </Draw>
          发表评论
        </button>
        <SideButtons />
        <ActionButtons />
        <PlayerControls />
      </div>
    </div>
  );
}
